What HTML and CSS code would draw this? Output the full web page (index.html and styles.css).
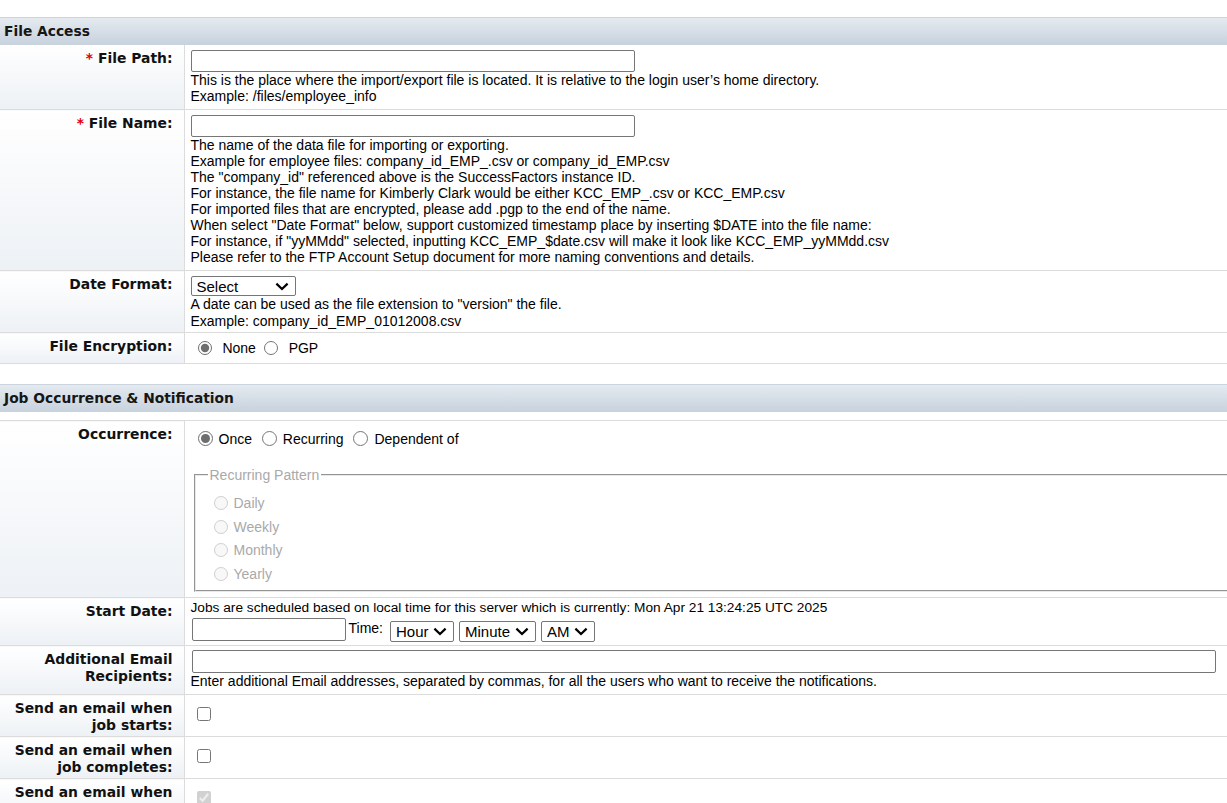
FILE: index.html
```html
<!DOCTYPE html>
<html lang="en">
<head>
    <meta charset="UTF-8">
    <title>FTP Job Setup</title>
    <link rel="stylesheet" href="styles.css">
</head>
<body>
    <div class="section">
        <div class="section-header">File Access</div>
        <table class="form-table">
            <colgroup>
                <col class="label-col">
                <col>
            </colgroup>
            <tr>
                <td class="label"><span class="required">*</span> File Path:</td>
                <td class="value">
                    <input type="text" class="text-input path-input">
                    This is the place where the import/export file is located. It is relative to the login user’s home directory.<br>
                    Example: /files/employee_info
                </td>
            </tr>
            <tr>
                <td class="label"><span class="required">*</span> File Name:</td>
                <td class="value">
                    <input type="text" class="text-input path-input">
                    The name of the data file for importing or exporting.<br>
                    Example for employee files: company_id_EMP_.csv or company_id_EMP.csv<br>
                    The "company_id" referenced above is the SuccessFactors instance ID.<br>
                    For instance, the file name for Kimberly Clark would be either KCC_EMP_.csv or KCC_EMP.csv<br>
                    For imported files that are encrypted, please add .pgp to the end of the name.<br>
                    When select "Date Format" below, support customized timestamp place by inserting $DATE into the file name:<br>
                    For instance, if "yyMMdd" selected, inputting KCC_EMP_$date.csv will make it look like KCC_EMP_yyMMdd.csv<br>
                    Please refer to the FTP Account Setup document for more naming conventions and details.
                </td>
            </tr>
            <tr>
                <td class="label">Date Format:</td>
                <td class="value date-cell">
                    <select class="select date-select">
                        <option>Select</option>
                        <option>yyMMdd</option>
                        <option>MMddyyyy</option>
                    </select>
                    <div class="help">A date can be used as the file extension to "version" the file.<br>
                    Example: company_id_EMP_01012008.csv</div>
                </td>
            </tr>
            <tr>
                <td class="label">File Encryption:</td>
                <td class="value radio-line encryption">
                    <label><input type="radio" name="enc" checked> None</label>
                    <label><input type="radio" name="enc"> PGP</label>
                </td>
            </tr>
        </table>
    </div>

    <div class="section">
        <div class="section-header">Job Occurrence &amp; Notification</div>
        <table class="form-table spaced">
            <colgroup>
                <col class="label-col">
                <col>
            </colgroup>
            <tr>
                <td class="label">Occurrence:</td>
                <td class="value">
                    <div class="radio-line occurrence">
                        <label><input type="radio" name="occ" checked>Once</label>
                        <label><input type="radio" name="occ">Recurring</label>
                        <label><input type="radio" name="occ">Dependent of</label>
                    </div>
                    <fieldset class="pattern" disabled>
                        <legend>Recurring Pattern</legend>
                        <div class="pattern-item"><label><input type="radio" name="pat">Daily</label></div>
                        <div class="pattern-item"><label><input type="radio" name="pat">Weekly</label></div>
                        <div class="pattern-item"><label><input type="radio" name="pat">Monthly</label></div>
                        <div class="pattern-item"><label><input type="radio" name="pat">Yearly</label></div>
                    </fieldset>
                </td>
            </tr>
            <tr>
                <td class="label">Start Date:</td>
                <td class="value start-date">
                    <div class="server-time">Jobs are scheduled based on local time for this server which is currently: Mon Apr 21 13:24:25 UTC 2025</div>
                    <div class="time-line">
                        <input type="text" class="text-input date-input">
                        <span class="time-label">Time:</span>
                        <select class="select">
                            <option>Hour</option>
                        </select>
                        <select class="select">
                            <option>Minute</option>
                        </select>
                        <select class="select">
                            <option>AM</option>
                            <option>PM</option>
                        </select>
                    </div>
                </td>
            </tr>
            <tr>
                <td class="label">Additional Email<br>Recipients:</td>
                <td class="value email-cell">
                    <input type="text" class="text-input email-input">
                    Enter additional Email addresses, separated by commas, for all the users who want to receive the notifications.
                </td>
            </tr>
            <tr>
                <td class="label">Send an email when<br>job starts:</td>
                <td class="value check-cell"><input type="checkbox"></td>
            </tr>
            <tr>
                <td class="label">Send an email when<br>job completes:</td>
                <td class="value check-cell"><input type="checkbox"></td>
            </tr>
            <tr>
                <td class="label">Send an email when<br>job fails:</td>
                <td class="value check-cell"><input type="checkbox" checked disabled></td>
            </tr>
        </table>
    </div>
</body>
</html>
```

FILE: styles.css
```css
body {
    margin: 0;
    padding-top: 17px;
    font-family: "Liberation Sans", Arial, sans-serif;
    font-size: 14px;
    color: #000;
    background-color: #fff;
    overflow: hidden;
}

.section + .section {
    margin-top: 20px;
}

.section-header {
    height: 27px;
    line-height: 27px;
    padding-left: 4px;
    font-family: "DejaVu Sans", Verdana, sans-serif;
    font-weight: bold;
    font-size: 13.8px;
    color: #161616;
    border-top: 1px solid #cbd4dd;
    background: linear-gradient(#e4eaf0, #c7d2dd);
}

.form-table {
    width: 100%;
    border-collapse: collapse;
}

.form-table.spaced {
    margin-top: 8px;
    border-top: 1px solid #dcdcdc;
}

.label-col {
    width: 184px;
}

.form-table tr {
    border-bottom: 1px solid #dcdcdc;
}

.label {
    padding: 5px 11px 2px 0;
    text-align: right;
    vertical-align: top;
    font-family: "DejaVu Sans", Verdana, sans-serif;
    font-weight: bold;
    font-size: 13.9px;
    line-height: 17px;
    color: #111;
    background: linear-gradient(#ffffff, #edf1f5);
    border-right: 1px solid #dcdcdc;
}

.required {
    color: #e00000;
}

.value {
    padding: 5px 6px 5px 6px;
    vertical-align: top;
    line-height: 16px;
}

.text-input {
    display: block;
    box-sizing: border-box;
    height: 22px;
    margin: 0;
    border: 1px solid #767676;
    border-radius: 2px;
    font-family: "Liberation Sans", Arial, sans-serif;
    font-size: 13px;
}

.path-input {
    width: 444px;
}

.email-cell {
    padding-top: 4px;
}

.email-input {
    width: 1024px;
    height: 23px;
    margin-left: 1px;
}

.select {
    appearance: none;
    -webkit-appearance: none;
    box-sizing: border-box;
    height: 21px;
    margin: 0;
    padding: 0 24px 0 5px;
    font-family: "Liberation Sans", Arial, sans-serif;
    font-size: 15px;
    line-height: 19px;
    border: 1px solid #767676;
    border-radius: 2px;
    color: #000;
    background: #fff url("data:image/svg+xml;utf8,<svg xmlns='http://www.w3.org/2000/svg' width='14' height='9' viewBox='0 0 14 9'><path d='M1.4 1.6 L7 7 L12.6 1.6' fill='none' stroke='black' stroke-width='2.2'/></svg>") no-repeat right 6px center;
}

.date-cell {
    padding-bottom: 3px;
}

.date-select {
    width: 105px;
    height: 20px;
}

.help {
    line-height: 16.5px;
}

.radio-line {
    line-height: 20px;
}

input[type="radio"] {
    width: 14px;
    height: 14px;
    margin: 3px 5px 0 7px;
    vertical-align: -2px;
    accent-color: #6e6e6e;
}

.encryption label + label input {
    margin-left: 4px;
}

.encryption input {
    margin-right: 7px;
}

.occurrence {
    padding-top: 2px;
}

.occurrence input {
    width: 15px;
    height: 15px;
    margin: 3px 6px 0 7px;
}

.occurrence label + label input {
    margin-left: 6px;
}

.pattern {
    margin: 18px -30px 0 3px;
    padding: 9px 12px 4px;
    border: 2px groove #e8e8e8;
    color: #a9a9a9;
    font-size: 14px;
}

.pattern legend {
    padding: 0 2px;
    color: #a9a9a9;
}

.pattern-item {
    height: 23.5px;
    line-height: 23.5px;
}

.pattern-item input {
    margin: 0 6px 0 6px;
}

.start-date {
    padding: 2px 6px 3px 6px;
}

.server-time {
    font-size: 13.7px;
}

.time-line {
    display: flex;
    align-items: flex-start;
    gap: 5px;
    margin-top: 2px;
}

.date-input {
    width: 154px;
    height: 23px;
    margin-left: 1px;
}

.time-line .select {
    margin-top: 3px;
}

.time-label {
    margin: 2px 2px 0 -2px;
}

.check-cell {
    vertical-align: middle;
}

.check-cell input {
    margin: 0 0 0 6px;
    width: 14px;
    height: 14px;
    accent-color: #6e6e6e;
}
```
